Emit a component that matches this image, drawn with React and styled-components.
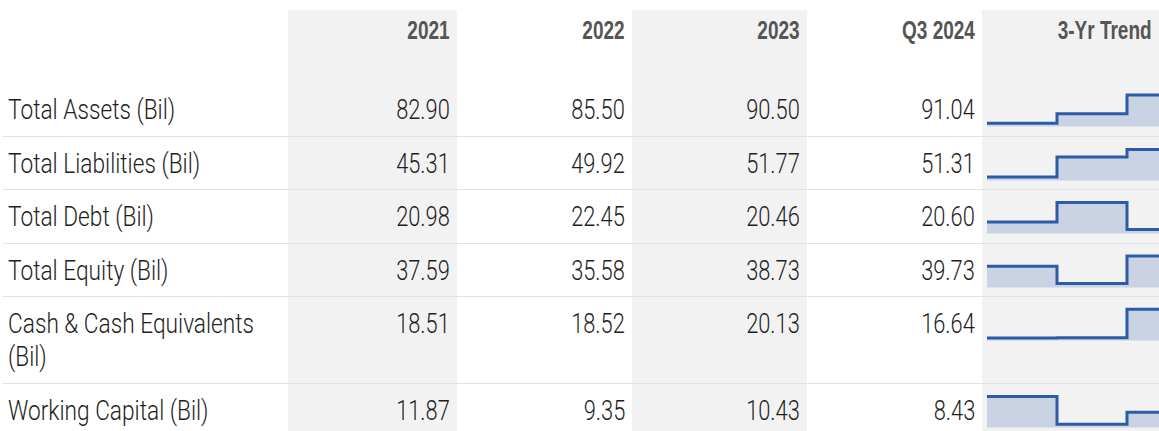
import styled, { createGlobalStyle } from "styled-components";

const GlobalStyle = createGlobalStyle`
  html, body {
    margin: 0;
    padding: 0;
    background: #fff;
    overflow: hidden;
  }
  body {
    font-family: Roboto, "Liberation Sans", Arial, sans-serif;
    color: #1e1e1e;
  }
`;

const COLS = "285px 169px 175px 175px 175px 177px";

const Wrapper = styled.div`
  padding: 10px 0 0 3px;
  width: 1159px;
  box-sizing: border-box;
`;

const HeaderRow = styled.div`
  display: grid;
  grid-template-columns: ${COLS};
  height: 73px;
`;

const HeadCell = styled.div`
  background: ${(p) => (p.$shade ? "#f2f2f2" : "transparent")};
  font-family: "Liberation Sans", Arial, sans-serif;
  font-size: 25px;
  font-weight: 700;
  line-height: 30px;
  color: #555;
  text-align: right;
  padding: 5px 7px 0 0;
  overflow: hidden;
`;

const Row = styled.div`
  display: grid;
  grid-template-columns: ${COLS};
  border-bottom: 1px solid #e3e3e3;
`;

const Label = styled.div`
  font-size: 28px;
  font-weight: 300;
  line-height: 33px;
  padding: 10px 0 9.5px 5px;
  overflow: hidden;
`;

const Value = styled.div`
  background: ${(p) => (p.$shade ? "#f2f2f2" : "transparent")};
  font-size: 28px;
  font-weight: 300;
  line-height: 33px;
  text-align: right;
  padding: 10px 7px 9.5px 0;
  overflow: hidden;
`;

/* the reference face is a condensed one: squeeze a regular face horizontally */
const Narrow = styled.span`
  display: inline-block;
  white-space: ${(p) => (p.$wrap ? "normal" : "nowrap")};
  width: ${(p) => (p.$wrap ? "345px" : "auto")};
  transform: scaleX(${(p) => p.$sx || 0.78});
  transform-origin: ${(p) => (p.$left ? "left" : "right")} center;
`;

const TrendCell = styled.div`
  background: #f2f2f2;
  padding-left: 5px;
  overflow: hidden;
`;

const Spark = styled.svg`
  display: block;
`;

const rows = [
  { label: "Total Assets (Bil)", values: ["82.90", "85.50", "90.50", "91.04"], trend: [40.3, 30.7, 12, 10] },
  { label: "Total Liabilities (Bil)", values: ["45.31", "49.92", "51.77", "51.31"], trend: [40, 20, 12.6, 14] },
  { label: "Total Debt (Bil)", values: ["20.98", "22.45", "20.46", "20.60"], trend: [32, 12.6, 39.6, 37] },
  { label: "Total Equity (Bil)", values: ["37.59", "35.58", "38.73", "39.73"], trend: [22.3, 39.6, 12, 10] },
  { label: "Cash & Cash Equivalents (Bil)", values: ["18.51", "18.52", "20.13", "16.64"], trend: [41, 40.7, 12.3, 24] },
  { label: "Working Capital (Bil)", values: ["11.87", "9.35", "10.43", "8.43"], trend: [12.6, 40.3, 28.3, 32] },
];

const headers = ["2021", "2022", "2023", "Q3 2024", "3-Yr Trend"];

function Sparkline({ points }) {
  const seg = 70;
  const bottom = 43.5;
  let line = `M0,${points[0]}`;
  points.forEach((y, i) => {
    if (i > 0) line += ` V${y}`;
    line += ` H${(i + 1) * seg}`;
  });
  const area = `${line} V${bottom} H0 Z`;
  return (
    <Spark width={seg * points.length} height={46}>
      <path d={area} fill="#c9d3e3" />
      <path d={line} fill="none" stroke="#2c5ba8" strokeWidth="3" />
    </Spark>
  );
}

export default function App() {
  return (
    <>
      <GlobalStyle />
      <Wrapper>
        <HeaderRow>
          <div />
          {headers.map((h, i) => (
            <HeadCell key={h} $shade={i % 2 === 0}>
              <Narrow $sx={0.76}>{h}</Narrow>
            </HeadCell>
          ))}
        </HeaderRow>
        {rows.map((r) => (
          <Row key={r.label}>
            <Label>
              <Narrow $left $wrap $sx={0.81}>
                {r.label}
              </Narrow>
            </Label>
            {r.values.map((v, i) => (
              <Value key={i} $shade={i % 2 === 0}>
                <Narrow>{v}</Narrow>
              </Value>
            ))}
            <TrendCell>
              <Sparkline points={r.trend} />
            </TrendCell>
          </Row>
        ))}
      </Wrapper>
    </>
  );
}
